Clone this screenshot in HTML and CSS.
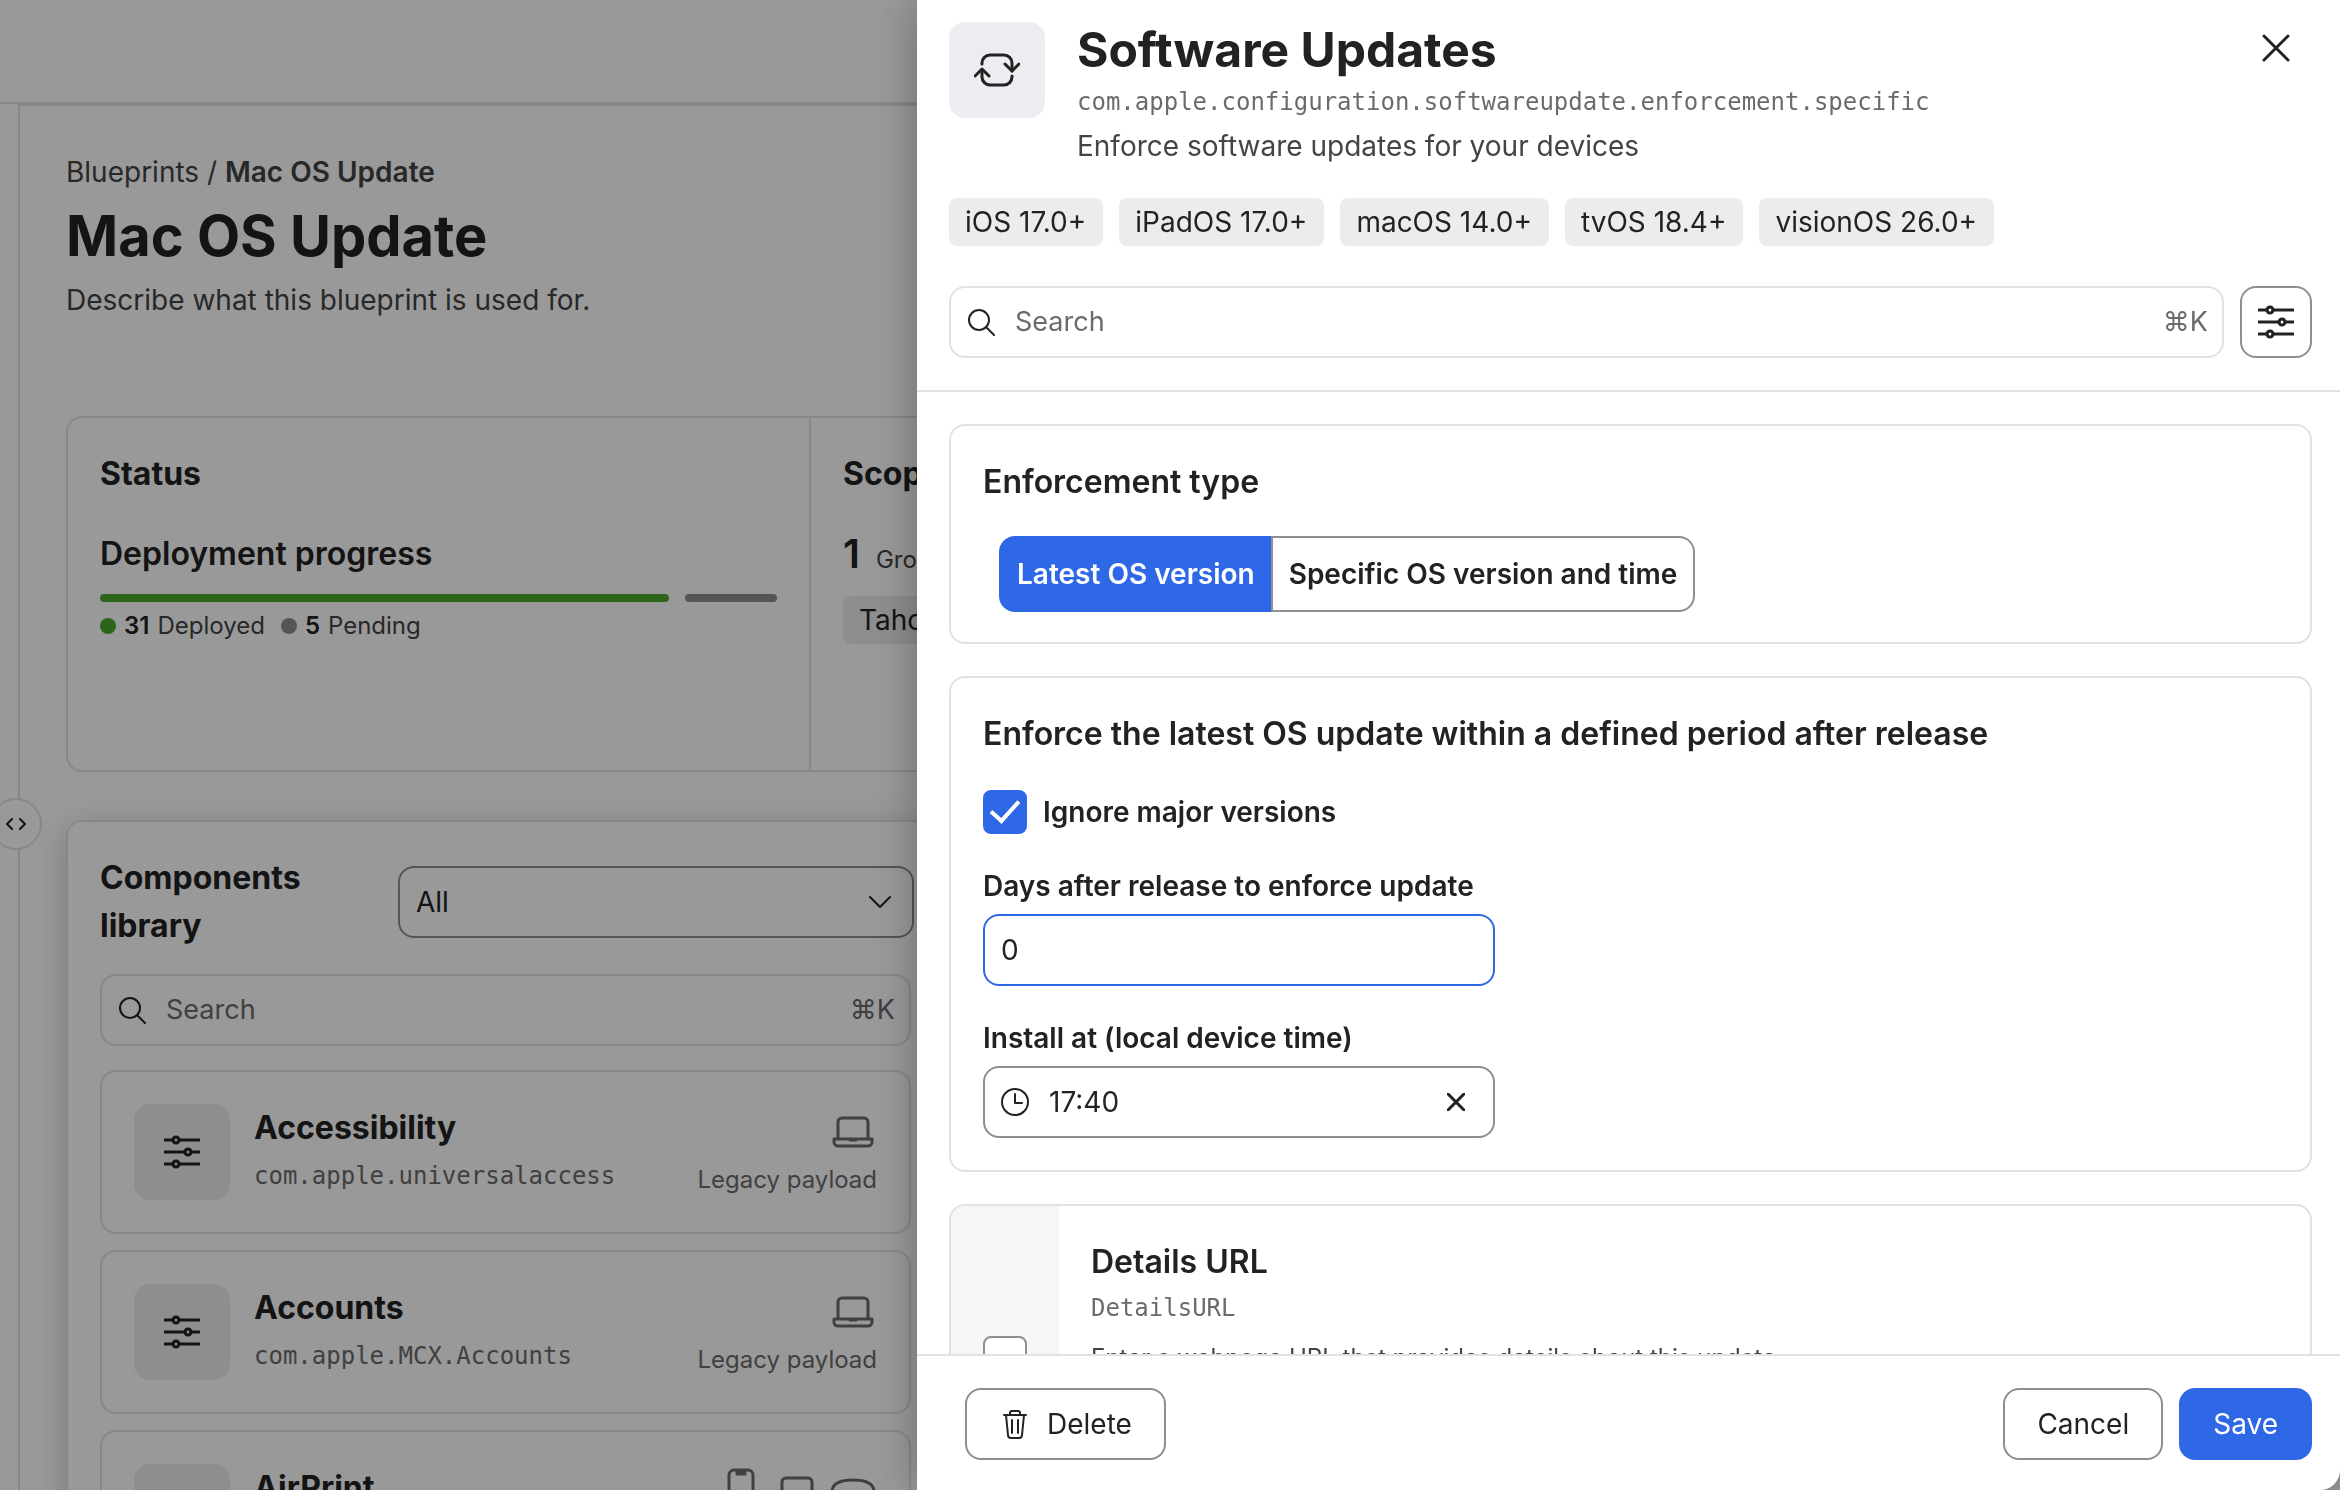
FILE: index.html
```html
<!DOCTYPE html>
<html lang="en">
<head>
    <meta charset="UTF-8">
    <meta name="viewport" content="width=device-width, initial-scale=1.0">
    <title>Mac OS Update - Blueprints</title>
    <link rel="stylesheet" href="styles.css">
</head>
<body>

    <!-- Shared icons -->
    <svg class="sprite" aria-hidden="true">
        <symbol id="icon-sliders" viewBox="0 0 36 36">
            <path d="M1 6h8M15 6h20M1 18h20M27 18h8M1 30h8M15 30h20"/>
            <circle cx="12" cy="6" r="3"/>
            <circle cx="24" cy="18" r="3"/>
            <circle cx="12" cy="30" r="3"/>
        </symbol>
        <symbol id="icon-search" viewBox="0 0 28 28">
            <circle cx="12" cy="12" r="10"/>
            <path d="M19 19l8 8"/>
        </symbol>
        <symbol id="icon-laptop" viewBox="0 0 48 48">
            <path d="M9 30V14a4 4 0 0 1 4-4h22a4 4 0 0 1 4 4v16"/>
            <path d="M5 31h38v3a4 4 0 0 1-4 4H9a4 4 0 0 1-4-4z"/>
            <path d="M21 32h6"/>
        </symbol>
        <symbol id="icon-phone" viewBox="0 0 48 48">
            <rect x="12" y="2" width="24" height="44" rx="5"/>
            <path d="M20 3v3h8V3" fill="currentColor"/>
        </symbol>
        <symbol id="icon-headset" viewBox="0 0 48 48">
            <path d="M24 12c-14 0-21 4-21 12 0 7 4 12 9 12s8-6 12-6 7 6 12 6 9-5 9-12c0-8-7-12-21-12z"/>
        </symbol>
    </svg>

    <div class="page">
        <header class="topbar"></header>

        <main class="main">
            <nav class="breadcrumb"><a href="#">Blueprints</a> / <strong>Mac OS Update</strong></nav>
            <h1>Mac OS Update</h1>
            <p class="description">Describe what this blueprint is used for.</p>

            <section class="summary">
                <div class="status">
                    <h2>Status</h2>
                    <h3>Deployment progress</h3>
                    <div class="progress">
                        <span class="bar deployed" style="flex-grow: 31"></span>
                        <span class="bar pending" style="flex-grow: 5"></span>
                    </div>
                    <div class="legend">
                        <span class="dot deployed"></span><b>31</b><span>Deployed</span>
                        <span class="dot pending"></span><b>5</b><span>Pending</span>
                    </div>
                </div>
                <div class="scope">
                    <h2>Scope</h2>
                    <div class="count"><b>1</b><span>Group</span></div>
                    <span class="chip">Tahoe</span>
                </div>
            </section>

            <section class="library">
                <div class="library-head">
                    <h2><label for="libraryFilter">Components library</label></h2>
                    <div class="select">
                        <select id="libraryFilter">
                            <option>All</option>
                        </select>
                        <svg class="icon" width="24" height="14" viewBox="0 0 24 14"><path d="M2 2l10 10L22 2"/></svg>
                    </div>
                </div>

                <div class="search">
                    <svg class="icon" width="28" height="28"><use href="#icon-search"/></svg>
                    <input type="text" placeholder="Search" aria-label="Search components">
                    <span>⌘K</span>
                </div>

                <article class="component">
                    <div class="tile"><svg class="icon bold" width="36" height="36"><use href="#icon-sliders"/></svg></div>
                    <div class="component-text">
                        <h4>Accessibility</h4>
                        <code>com.apple.universalaccess</code>
                    </div>
                    <div class="component-side">
                        <div class="devices">
                            <svg class="icon bold" width="48" height="48"><use href="#icon-laptop"/></svg>
                        </div>
                        <span>Legacy payload</span>
                    </div>
                </article>

                <article class="component">
                    <div class="tile"><svg class="icon bold" width="36" height="36"><use href="#icon-sliders"/></svg></div>
                    <div class="component-text">
                        <h4>Accounts</h4>
                        <code>com.apple.MCX.Accounts</code>
                    </div>
                    <div class="component-side">
                        <div class="devices">
                            <svg class="icon bold" width="48" height="48"><use href="#icon-laptop"/></svg>
                        </div>
                        <span>Legacy payload</span>
                    </div>
                </article>

                <article class="component">
                    <div class="tile"><svg class="icon bold" width="36" height="36"><use href="#icon-sliders"/></svg></div>
                    <div class="component-text">
                        <h4>AirPrint</h4>
                    </div>
                    <div class="component-side">
                        <div class="devices">
                            <svg class="icon bold" width="48" height="48"><use href="#icon-phone"/></svg>
                            <svg class="icon bold" width="48" height="48"><use href="#icon-laptop"/></svg>
                            <svg class="icon bold" width="48" height="48"><use href="#icon-headset"/></svg>
                        </div>
                    </div>
                </article>
            </section>
        </main>

        <button type="button" class="rail-handle" aria-label="Resize sidebar">
            <svg class="icon" width="20" height="14" viewBox="0 0 20 14"><path d="M6 2L1 7l5 5M14 2l5 5-5 5"/></svg>
        </button>
    </div>

    <div class="overlay"></div>

    <aside class="drawer" role="dialog" aria-labelledby="drawerTitle">
        <header class="drawer-head">
            <div class="drawer-intro">
                <div class="tile">
                    <svg class="icon bold" width="46" height="36" viewBox="0 0 46 36">
                        <path d="M8 12v-1a8 8 0 0 1 8-8h14a8 8 0 0 1 8 8v8"/>
                        <path d="M31 12l7 7 7-7"/>
                        <path d="M38 24v1a8 8 0 0 1-8 8H16a8 8 0 0 1-8-8v-7"/>
                        <path d="M1 24l7-7 7 7"/>
                    </svg>
                </div>
                <div class="drawer-title">
                    <h2 id="drawerTitle">Software Updates</h2>
                    <code>com.apple.configuration.softwareupdate.enforcement.specific</code>
                    <p>Enforce software updates for your devices</p>
                </div>
                <button type="button" class="close" aria-label="Close">
                    <svg class="icon bold" width="28" height="28" viewBox="0 0 28 28"><path d="M2 2l24 24M26 2L2 26"/></svg>
                </button>
            </div>

            <div class="chips">
                <span class="chip">iOS 17.0+</span>
                <span class="chip">iPadOS 17.0+</span>
                <span class="chip">macOS 14.0+</span>
                <span class="chip">tvOS 18.4+</span>
                <span class="chip">visionOS 26.0+</span>
            </div>

            <div class="search-row">
                <div class="search">
                    <svg class="icon" width="28" height="28"><use href="#icon-search"/></svg>
                    <input type="text" placeholder="Search" aria-label="Search settings">
                    <span>⌘K</span>
                </div>
                <button type="button" class="filter-btn" aria-label="Filters">
                    <svg class="icon bold" width="36" height="36"><use href="#icon-sliders"/></svg>
                </button>
            </div>
        </header>

        <form class="drawer-body" id="settingsForm">
            <section class="card enforcement">
                <h3>Enforcement type</h3>
                <div class="segmented">
                    <button type="button" class="active">Latest OS version</button>
                    <button type="button">Specific OS version and time</button>
                </div>
            </section>

            <section class="card fields">
                <h3>Enforce the latest OS update within a defined period after release</h3>
                <div class="check-row">
                    <input type="checkbox" id="ignoreMajor" checked>
                    <label for="ignoreMajor">Ignore major versions</label>
                </div>
                <div class="field">
                    <label for="days">Days after release to enforce update</label>
                    <div class="input-box focused"><input type="text" id="days" value="0"></div>
                </div>
                <div class="field">
                    <label for="installAt">Install at (local device time)</label>
                    <div class="input-box">
                        <svg class="icon" width="28" height="28" viewBox="0 0 28 28"><circle cx="14" cy="14" r="13"/><path d="M14 6v9h7"/></svg>
                        <input type="text" id="installAt" value="17:40">
                        <button type="button" class="clear" aria-label="Clear time">
                            <svg class="icon bold" width="18" height="18" viewBox="0 0 18 18"><path d="M1 1l16 16M17 1L1 17"/></svg>
                        </button>
                    </div>
                </div>
            </section>

            <section class="card optional">
                <div class="gutter"><input type="checkbox" id="detailsUrl"></div>
                <div class="optional-text">
                    <h3><label for="detailsUrl">Details URL</label></h3>
                    <code>DetailsURL</code>
                    <p>Enter a webpage URL that provides details about this update.</p>
                </div>
            </section>
        </form>

        <footer class="drawer-foot">
            <button type="button" class="btn delete">
                <svg class="icon" width="24" height="30" viewBox="0 0 24 30">
                    <path d="M1 6h22M7 6V4a2 2 0 0 1 2-2h6a2 2 0 0 1 2 2v2M3 6l2 20a3 3 0 0 0 3 3h8a3 3 0 0 0 3-3l2-20M9 11v13M15 11v13"/>
                </svg>
                Delete
            </button>
            <button type="button" class="btn">Cancel</button>
            <button type="submit" form="settingsForm" class="btn primary">Save</button>
        </footer>
    </aside>

</body>
</html>
```
FILE: styles.css
```css
* {
    box-sizing: border-box;
}

body {
    margin: 0;
    height: 100vh;
    overflow: hidden;
    background: #fff;
    color: #222;
    font-family: Inter, "Liberation Sans", sans-serif;
    font-size: 28px;
    line-height: 40px;
}

h1, h2, h3, h4, p {
    margin: 0;
}

h2 {
    font-size: 32px;
    line-height: 48px;
    font-weight: 700;
}

h3 {
    font-size: 32px;
    line-height: 48px;
    font-weight: 600;
}

code {
    font-family: "DejaVu Sans Mono", monospace;
    font-size: 24px;
    line-height: 40px;
    color: #6b6b6b;
}

button, input, select {
    font: inherit;
    color: inherit;
}

button {
    cursor: pointer;
}

.sprite {
    position: absolute;
    width: 0;
    height: 0;
}

.icon {
    flex: none;
    fill: none;
    stroke: currentColor;
    stroke-width: 2;
    stroke-linecap: round;
    stroke-linejoin: round;
}

.icon.bold {
    stroke-width: 3;
}

/* Page behind the drawer */
.page {
    position: relative;
    display: flex;
    flex-direction: column;
    height: 100%;
}

.topbar {
    flex: none;
    height: 104px;
    border-bottom: 2px solid #e2e2e2;
}

.main {
    flex: 1;
    min-height: 0;
    overflow: hidden;
    margin-left: 18px;
    padding: 46px 46px 0;
    border-top: 2px solid #e2e2e2;
    border-left: 2px solid #e2e2e2;
}

.breadcrumb, .description {
    color: #444;
}

.breadcrumb a {
    color: inherit;
    text-decoration: none;
}

.breadcrumb strong {
    font-weight: 600;
}

h1 {
    margin: 8px 0;
    font-size: 56px;
    line-height: 72px;
    font-weight: 700;
}

.summary {
    display: grid;
    grid-template-columns: 743px 1fr;
    margin-top: 96px;
    border: 2px solid #e2e2e2;
    border-radius: 16px;
}

.status, .scope {
    height: 352px;
    padding: 32px;
}

.status {
    border-right: 2px solid #e2e2e2;
}

.status h3 {
    margin-top: 32px;
}

.progress {
    display: flex;
    gap: 16px;
    margin-top: 16px;
}

.bar {
    flex-basis: 0;
    height: 8px;
    border-radius: 4px;
}

.bar.deployed, .dot.deployed {
    background: #4aa82c;
}

.bar.pending, .dot.pending {
    background: #8e8e93;
}

.legend {
    display: flex;
    align-items: center;
    gap: 8px;
    margin-top: 8px;
    line-height: 32px;
    font-size: 24px;
    color: #444;
}

.legend b {
    font-weight: 600;
    color: #222;
}

.dot {
    width: 16px;
    height: 16px;
    border-radius: 50%;
}

.legend span + .dot {
    margin-left: 8px;
}

.count {
    display: flex;
    align-items: baseline;
    gap: 16px;
    margin: 32px 0 12px;
    line-height: 48px;
    font-size: 24px;
    color: #444;
}

.count b {
    font-size: 40px;
    font-weight: 600;
    color: #222;
}

.chip {
    display: inline-block;
    padding: 4px 17px 4px 16px;
    border-radius: 8px;
    background: #ececec;
}

.library {
    margin-top: 48px;
    padding: 32px;
    width: 882px;
    border: 2px solid #e2e2e2;
    border-radius: 16px;
    box-shadow: 0 8px 32px rgba(0, 0, 0, 0.2);
}

.library-head {
    display: flex;
    align-items: center;
    gap: 64px;
    margin-bottom: 24px;
}

.library-head h2 {
    width: 236px;
}

.select {
    display: flex;
    align-items: center;
    flex: none;
    width: 516px;
    height: 72px;
    padding: 0 20px 0 0;
    border: 2px solid #8e8e93;
    border-radius: 16px;
}

.select select {
    flex: 1;
    height: 68px;
    padding: 0 16px;
    border: none;
    background: none;
    appearance: none;
}

.search {
    display: flex;
    align-items: center;
    flex: 1;
    gap: 20px;
    height: 72px;
    padding: 0 14px 0 16px;
    border: 2px solid #e2e2e2;
    border-radius: 16px;
    font-size: 27px;
    color: #6b6b6b;
}

.library .search {
    margin-bottom: 24px;
}

.search .icon {
    color: #222;
}

.search input {
    flex: 1;
    min-width: 0;
    padding: 0;
    border: none;
    outline: none;
    background: none;
}

.search input::placeholder {
    color: #6b6b6b;
    opacity: 1;
}

.library .search, .component {
    width: 811px;
}

.component {
    display: flex;
    gap: 24px;
    height: 164px;
    margin-bottom: 16px;
    padding: 32px;
    border: 2px solid #e2e2e2;
    border-radius: 16px;
}

.tile {
    display: flex;
    align-items: center;
    justify-content: center;
    flex: none;
    width: 96px;
    height: 96px;
    border-radius: 16px;
    background: #ecedf1;
}

.component-text {
    flex: 1;
}

h4 {
    font-size: 32px;
    line-height: 48px;
    font-weight: 700;
}

.component-text code {
    display: block;
    line-height: 48px;
}

.component-side {
    display: flex;
    flex-direction: column;
    align-items: flex-end;
    font-size: 24px;
    color: #6b6b6b;
}

.devices {
    display: flex;
    align-items: center;
    gap: 8px;
    height: 56px;
}

.rail-handle {
    position: absolute;
    top: 798px;
    left: -10px;
    display: flex;
    align-items: center;
    justify-content: center;
    width: 52px;
    height: 52px;
    padding: 0;
    border: 2px solid #e2e2e2;
    border-radius: 50%;
    background: #fff;
}

.overlay {
    position: fixed;
    inset: 0;
    background: rgba(0, 0, 0, 0.4);
}

/* Drawer */
.drawer {
    position: fixed;
    inset: 0 0 0 917px;
    display: flex;
    flex-direction: column;
    background: #fff;
    border-radius: 0 0 20px 0;
    box-shadow: 0 0 48px rgba(0, 0, 0, 0.3);
}

.drawer-head {
    padding: 14px 28px 32px 32px;
    border-bottom: 2px solid #e2e2e2;
}

.drawer-intro {
    display: flex;
    align-items: flex-start;
    gap: 32px;
}

.drawer-intro .tile {
    margin-top: 8px;
}

.drawer-title {
    flex: 1;
}

.drawer-title h2 {
    font-size: 48px;
    line-height: 72px;
}

.drawer-title code {
    display: block;
    line-height: 32px;
}

.drawer-title p {
    line-height: 56px;
    color: #444;
}

.close {
    display: flex;
    padding: 20px 22px;
    border: none;
    background: none;
}

.chips {
    display: flex;
    gap: 16px;
    margin: 24px 0 40px;
}

.search-row {
    display: flex;
    gap: 16px;
}

.filter-btn {
    display: flex;
    align-items: center;
    justify-content: center;
    width: 72px;
    height: 72px;
    padding: 0;
    border: 2px solid #8e8e93;
    border-radius: 16px;
    background: #fff;
}

.drawer-body {
    display: flex;
    flex-direction: column;
    flex: 1;
    gap: 32px;
    min-height: 0;
    overflow: hidden;
    padding: 32px 28px 32px 32px;
}

.card {
    flex: none;
    padding: 32px;
    border: 2px solid #e2e2e2;
    border-radius: 16px;
}

.enforcement {
    padding-bottom: 30px;
}

.segmented {
    display: flex;
    margin: 30px 16px 0;
}

.segmented button {
    height: 76px;
    padding: 0 16px;
    border: 2px solid #8e8e93;
    border-left: none;
    border-radius: 0 16px 16px 0;
    background: #fff;
    font-weight: 600;
}

.segmented .active {
    padding: 0 16px 0 18px;
    border-width: 0 2px 0 0;
    border-radius: 16px 0 0 16px;
    background: #2f68e6;
    color: #fff;
}

.fields {
    display: flex;
    flex-direction: column;
    gap: 32px;
}

.check-row {
    display: flex;
    align-items: center;
    gap: 16px;
    font-weight: 600;
}

input[type="checkbox"] {
    flex: none;
    width: 44px;
    height: 44px;
    margin: 0;
    appearance: none;
    border: 2px solid #8e8e93;
    border-radius: 8px;
    background: #fff;
}

input[type="checkbox"]:checked {
    display: grid;
    place-items: center;
    border-color: #2f68e6;
    background: #2f68e6;
}

input[type="checkbox"]:checked::before {
    content: "";
    width: 12px;
    height: 24px;
    margin-bottom: 8px;
    border: solid #fff;
    border-width: 0 4px 4px 0;
    transform: rotate(42deg);
}

.field {
    display: flex;
    flex-direction: column;
    gap: 8px;
    width: 512px;
    max-width: 100%;
}

.field label {
    font-weight: 600;
}

.input-box {
    display: flex;
    align-items: center;
    gap: 20px;
    height: 72px;
    padding: 0 16px;
    border: 2px solid #8e8e93;
    border-radius: 16px;
}

.input-box.focused {
    border-color: #2f68e6;
}

.input-box input {
    flex: 1;
    min-width: 0;
    padding: 0;
    border: none;
    outline: none;
    background: none;
}

.clear {
    display: flex;
    padding: 12px;
    border: none;
    background: none;
}

.optional {
    display: flex;
    padding: 0;
    overflow: hidden;
}

.gutter {
    display: flex;
    align-items: center;
    padding: 0 32px;
    background: #f5f6f8;
}

.optional-text {
    height: 304px;
    padding: 32px;
}

.optional-text code {
    display: block;
    line-height: 44px;
}

.optional-text p {
    margin-top: 8px;
    font-size: 24px;
    color: #444;
}

.drawer-foot {
    display: flex;
    gap: 16px;
    padding: 32px 28px 30px 48px;
    border-top: 2px solid #e2e2e2;
}

.btn {
    display: flex;
    align-items: center;
    gap: 20px;
    height: 72px;
    padding: 0 32px;
    border: 2px solid #8e8e93;
    border-radius: 16px;
    background: #fff;
}

.btn.delete {
    margin-right: auto;
    padding: 0 32px 0 36px;
}

.btn.primary {
    border-color: #2f68e6;
    background: #2f68e6;
    color: #fff;
}
```
